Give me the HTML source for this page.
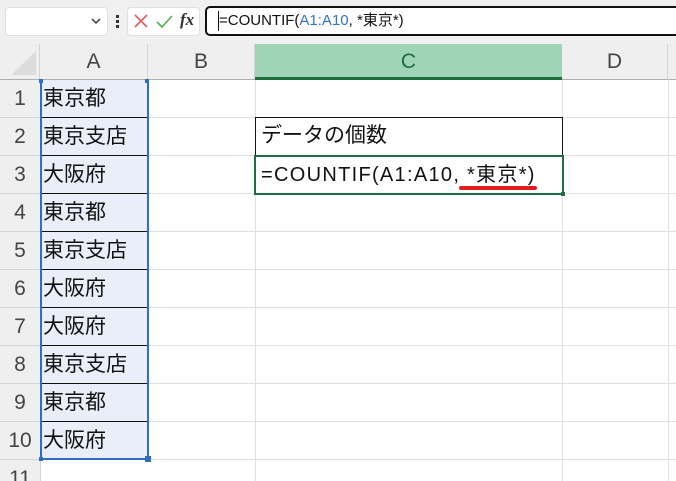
<!DOCTYPE html>
<html><head><meta charset="utf-8"><style>
*{margin:0;padding:0;box-sizing:border-box}
html,body{width:676px;height:481px;overflow:hidden}
body{background:#fff;position:relative;font-family:"Liberation Sans","Noto Sans CJK JP",sans-serif}
.a{position:absolute}
.tb{left:0;top:0;width:676px;height:44px;background:#f0f0f0}
.rh{left:0;width:40px;text-align:center;color:#444;font-size:21px;background:#efefef;border-bottom:1px solid #d4d4d4}
.ch{top:44px;height:36px;background:#efefef;color:#444;font-size:21px;text-align:center;line-height:35px;border-right:1px solid #d4d4d4;border-bottom:1px solid #b0b0b0}
.hl{height:1px;background:#e1e1e1;left:40px;width:636px}
.vl{width:1px;background:#e1e1e1;top:80px;height:401px}
.ac{left:41px;width:106px;height:38px;background:#e9eef8;font-size:21px;color:#111;padding-left:2px;line-height:38px;border-bottom:1.5px solid #111;white-space:nowrap}
</style></head><body>
<div class="a tb"></div>
<div class="a" style="left:5px;top:7px;width:103px;height:29px;background:#fff;border:1px solid #e0e0e0;border-radius:4px"></div>
<svg class="a" style="left:90px;top:16px" width="12" height="10"><path d="M2 3 L6 7 L10 3" stroke="#333" stroke-width="1.5" fill="none"/></svg>
<div class="a" style="left:116px;top:15px;width:3px;height:3px;background:#333;box-shadow:0 5px 0 #333,0 10px 0 #333"></div>
<div class="a" style="left:127px;top:7px;width:73px;height:29px;background:#fff;border:1px solid #e0e0e0;border-radius:4px"></div>
<svg class="a" style="left:132px;top:12px" width="20" height="20"><path d="M3 3 L15 15 M15 3 L3 15" stroke="#e05a5a" stroke-width="1.6"/></svg>
<svg class="a" style="left:155px;top:12px" width="20" height="20"><path d="M2 10 L7 15 L17 4" stroke="#4caf50" stroke-width="1.6" fill="none"/></svg>
<div class="a" style="left:180px;top:10px;font-family:'Liberation Serif',serif;font-style:italic;font-weight:bold;font-size:17px;color:#333">fx</div>
<div class="a" style="left:205px;top:6px;width:480px;height:30px;background:#fff;border:2px solid #111;border-radius:5px"></div>
<div class="a" style="left:218px;top:11px;width:1px;height:20px;background:#111"></div>
<div class="a" style="left:219px;top:11px;font-size:15px;color:#111;line-height:20px">=COUNTIF(<span style="color:#2f74c6">A1:A10</span>, *東京*)</div>

<div class="a" style="left:0;top:44px;width:40px;height:36px;background:#efefef;border-right:1px solid #d4d4d4;border-bottom:1px solid #b0b0b0"></div>
<svg class="a" style="left:8px;top:49px" width="30" height="28"><path d="M28 2 L28 26 L3 26 Z" fill="#dcdcdc"/></svg>
<div class="a ch" style="left:40px;width:108px">A</div>
<div class="a ch" style="left:148px;width:107px">B</div>
<div class="a ch" style="left:255px;width:307px;background:#9fd5b7;color:#1e6e42;border-bottom:3px solid #1e6e42;border-right:none">C</div>
<div class="a ch" style="left:562px;width:106px">D</div>
<div class="a ch" style="left:668px;width:10px"></div>

<div class="a vl" style="left:40px;background:#d4d4d4"></div>
<div class="a vl" style="left:255px"></div>
<div class="a vl" style="left:562px"></div>
<div class="a vl" style="left:668px"></div>
<div class="a hl" style="top:117px"></div><div class="a hl" style="top:155px"></div><div class="a hl" style="top:193px"></div><div class="a hl" style="top:231px"></div><div class="a hl" style="top:269px"></div><div class="a hl" style="top:307px"></div><div class="a hl" style="top:345px"></div><div class="a hl" style="top:383px"></div><div class="a hl" style="top:421px"></div><div class="a hl" style="top:459px"></div>

<div class="a rh" style="top:80px;height:38px;line-height:38px">1</div>
<div class="a rh" style="top:118px;height:38px;line-height:38px">2</div>
<div class="a rh" style="top:156px;height:38px;line-height:38px">3</div>
<div class="a rh" style="top:194px;height:38px;line-height:38px">4</div>
<div class="a rh" style="top:232px;height:38px;line-height:38px">5</div>
<div class="a rh" style="top:270px;height:38px;line-height:38px">6</div>
<div class="a rh" style="top:308px;height:38px;line-height:38px">7</div>
<div class="a rh" style="top:346px;height:38px;line-height:38px">8</div>
<div class="a rh" style="top:384px;height:38px;line-height:38px">9</div>
<div class="a rh" style="top:422px;height:38px;line-height:38px">10</div>
<div class="a rh" style="top:460px;height:21px;line-height:38px;border-bottom:none">11</div>

<div class="a ac" style="top:80px">東京都</div>
<div class="a ac" style="top:118px">東京支店</div>
<div class="a ac" style="top:156px">大阪府</div>
<div class="a ac" style="top:194px">東京都</div>
<div class="a ac" style="top:232px">東京支店</div>
<div class="a ac" style="top:270px">大阪府</div>
<div class="a ac" style="top:308px">大阪府</div>
<div class="a ac" style="top:346px">東京支店</div>
<div class="a ac" style="top:384px">東京都</div>
<div class="a ac" style="top:422px;border-bottom:none">大阪府</div>
<div class="a" style="left:40px;top:80px;width:109px;height:380px;border:2px solid #2f6ec8;border-top:none"></div>
<div class="a" style="left:39px;top:79px;width:4px;height:4px;background:#2f6ec8"></div>
<div class="a" style="left:145px;top:79px;width:4px;height:4px;background:#2f6ec8"></div>
<div class="a" style="left:39px;top:457px;width:4px;height:4px;background:#2f6ec8"></div>
<div class="a" style="left:145px;top:456px;width:6px;height:6px;background:#2f6ec8"></div>

<div class="a" style="left:255px;top:117px;width:308px;height:39px;border:1.5px solid #111;font-size:21px;color:#111;padding-left:5px;line-height:36px">データの個数</div>
<div class="a" style="left:254px;top:155px;width:310px;height:40px;border:2px solid #1e6e42;font-size:20px;letter-spacing:1.3px;color:#111;padding-left:5px;line-height:36px;white-space:nowrap">=COUNTIF(A1:A10, *東京*)</div>
<div class="a" style="left:561px;top:192px;width:4px;height:4px;background:#1e6e42"></div>
<div class="a" style="left:459px;top:186px;width:78px;height:4px;background:#e02020;border-radius:2px"></div>
</body></html>
